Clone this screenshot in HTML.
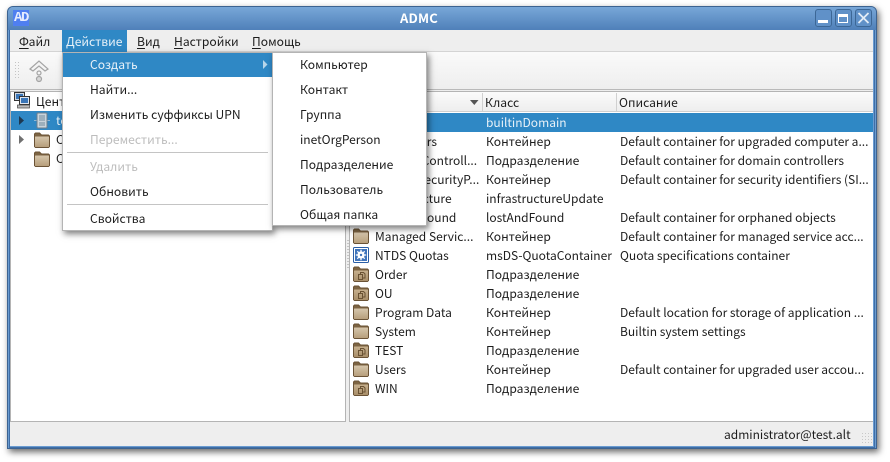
<!DOCTYPE html>
<html><head><meta charset="utf-8"><style>
*{box-sizing:border-box}
html,body{margin:0;padding:0;width:890px;height:462px;overflow:hidden;background:#fff}
body{position:relative;font:12.1px/16px "Noto Sans CJK SC","Liberation Sans",sans-serif;color:#1c1c1c}
.a,.t{position:absolute}
.t{white-space:nowrap;height:16px;margin-top:1px}
.l{font-size:12px}
u{text-underline-offset:2px}
.dis{color:#bdbdbd}
.w{color:#e8f1f8}
svg{position:absolute;display:block}
</style></head><body>
<svg width="0" height="0" style="position:absolute"><defs>
<linearGradient id="g" x1="0" y1="0" x2="0" y2="1"><stop offset="0" stop-color="#d6c6ac"/><stop offset="1" stop-color="#b79f7c"/></linearGradient>
<linearGradient id="h" x1="0" y1="0" x2="0" y2="1"><stop offset="0" stop-color="#c7b08e"/><stop offset="1" stop-color="#a88e69"/></linearGradient>
<symbol id="f" viewBox="0 0 16 16"><path d="M.5 4V2l1-1h4l2 2h7l1 1v10.500l-1 1h-13l-1-1z" fill="#7d6443" stroke="#6b5336"/><rect x="1" y="4.500" width="14" height="10.500" rx=".5" fill="url(#g)"/></symbol>
<symbol id="o" viewBox="0 0 16 16"><path d="M.5 4V2l1-1h4l2 2h7l1 1v10.500l-1 1h-13l-1-1z" fill="#7d6443" stroke="#6b5336"/><rect x="1" y="4.500" width="14" height="10.500" rx=".5" fill="url(#h)"/><path d="M5.500 8.500h4v5h-4zM7.500 8V6.500h3l1.500 1.500v4h-2" fill="none" stroke="#6a5233"/></symbol>
</defs></svg>

<!-- window frame + shadow -->
<div class="a" style="left:7px;top:6px;width:870px;height:443px;background:#6a9bd0;border:1px solid #3c6391;border-radius:6px 6px 0 0;box-shadow:2px 3px 7px rgba(0,0,0,.6)"></div>
<div class="a" style="left:9px;top:30px;width:866px;height:418px;border:1px solid #3f6ea6;border-top:0"></div>
<div class="a" style="left:8px;top:7px;width:868px;height:23px;background:linear-gradient(#78a7d8,#4f80b9);border-radius:5px 5px 0 0"></div>
<div class="a" style="left:13px;top:10px;width:16px;height:16px;background:#4f7ff0"></div>
<div class="t" style="left:14px;top:10px;width:15px;margin:0;color:#e6ecff;font:bold 14px/16px 'Liberation Mono',monospace;letter-spacing:-1.400px">AD</div>
<div class="t" style="left:400px;top:10px;margin:0;color:#fff;font-weight:bold;font-size:13px;letter-spacing:.2px">ADMC</div>
<!-- window buttons -->
<div class="a" style="left:815px;top:9px;width:17px;height:18px;border:1px solid #3c6796;border-radius:3px;background:#6091c8"></div>
<div class="a" style="left:835px;top:9px;width:17px;height:18px;border:1px solid #3c6796;border-radius:3px;background:#6091c8"></div>
<div class="a" style="left:855px;top:9px;width:17px;height:18px;border:1px solid #3c6796;border-radius:3px;background:#6091c8"></div>
<div class="a" style="left:818px;top:20px;width:10px;height:3px;background:#fff"></div>
<div class="a" style="left:838px;top:14px;width:10px;height:9px;border:1px solid #fff;border-top-width:3px"></div>
<svg style="left:857px;top:12px" width="13" height="12"><path d="M1.500 1l10 10M11.500 1l-10 10" stroke="#e4edf6" stroke-width="1.800"/></svg>

<!-- client -->
<div class="a" style="left:10px;top:30px;width:863px;height:416px;background:#eee"></div>
<div class="a" style="left:10px;top:51px;width:863px;height:1px;background:#d4d4d4"></div>
<div class="a" style="left:10px;top:52px;width:863px;height:37px;background:linear-gradient(#fafafa,#eee)"></div>
<div class="a" style="left:10px;top:89px;width:863px;height:1px;background:#b9b9b9"></div>
<div class="t" style="left:19px;top:33px"><u>Ф</u>айл</div>
<div class="a" style="left:62px;top:30px;width:65px;height:22px;background:#2f88c5"></div>
<div class="t w" style="left:66px;top:33px"><u>Д</u>ействие</div>
<div class="t" style="left:137px;top:33px"><u>В</u>ид</div>
<div class="t" style="left:174px;top:33px"><u>Н</u>астройки</div>
<div class="t" style="left:252px;top:33px"><u>П</u>омощь</div>
<!-- toolbar grip and icon -->
<div class="a" style="left:15px;top:62px;width:5px;height:18px;background:repeating-linear-gradient(90deg,#c4c4c4 0 1px,transparent 1px 3px);-webkit-mask:repeating-linear-gradient(#000 0 1px,transparent 1px 3px)"></div>
<svg style="left:28px;top:59px" width="22" height="24" fill="none" stroke="#a4a4a4" stroke-width="1.200"><path d="M2 10l9-8 9 8-3 2-6-5-6 5z" fill="#f4f4f4"/><circle cx="11" cy="14" r="2"/><circle cx="11" cy="20" r="2.500" fill="#d8d8d8"/></svg>

<!-- left pane -->
<div class="a" style="left:10px;top:91px;width:336px;height:331px;background:#fff;border:1px solid #b4b4b4"></div>
<svg style="left:14px;top:92px" width="17" height="17"><rect x=".5" y=".5" width="10" height="8" fill="#cfd8e2" stroke="#333"/><rect x="2" y="2" width="7" height="5" fill="#3a76b8"/><rect x="5.500" y="4.500" width="10" height="8" fill="#dfe6ee" stroke="#333"/><rect x="7" y="6" width="7" height="5" fill="#3a76b8"/><rect x="3.500" y="13" width="12" height="3" fill="#bbb" stroke="#444" stroke-width=".7"/></svg>
<div class="t" style="left:36px;top:93px">Центр</div>
<div class="a" style="left:11px;top:111px;width:52px;height:19px;background:#2f88c5"></div>
<svg style="left:19px;top:116px" width="6" height="9"><path d="M0 0l5 4.500-5 4.500z" fill="#1e3850"/></svg>
<svg style="left:34px;top:112px" width="16" height="17"><path d="M0 8.500h16" stroke="#8fb6d3"/><rect x="3" y="1" width="10" height="15" rx="1" fill="#c9d4dc" stroke="#6c7e8c"/><path d="M5 4h6M5 6h6M5 8h6M5 11h6M5 13h6" stroke="#6f8a9c"/></svg>
<div class="t w" style="left:56px;top:112px">test</div>
<svg style="left:19px;top:135px" width="6" height="9"><path d="M0 0l5 4.500-5 4.500z" fill="#707070"/></svg>
<svg style="left:34px;top:132px" width="16" height="16"><use href="#f"/></svg>
<div class="t" style="left:56px;top:131px">CN</div>
<svg style="left:34px;top:151px" width="16" height="16"><use href="#f"/></svg>
<div class="t" style="left:56px;top:150px">CN</div>

<div class="a" style="left:347px;top:240px;width:2px;height:30px;background:repeating-linear-gradient(#c4c4c4 0 1px,transparent 1px 3px)"></div>

<!-- right pane -->
<div class="a" style="left:349px;top:91px;width:524px;height:331px;background:#fff;border:1px solid #b4b4b4;border-right:0"></div>
<div class="a" style="left:350px;top:92px;width:523px;height:20px;background:linear-gradient(#fbfbfb,#eee);border-bottom:1px solid #d0d0d0"></div>
<div class="a" style="left:482px;top:93px;width:1px;height:18px;background:#d0d0d0"></div>
<div class="a" style="left:616px;top:93px;width:1px;height:18px;background:#d0d0d0"></div>
<svg style="left:470px;top:100px" width="9" height="5"><path d="M0 0h8.500l-4.200 5z" fill="#555"/></svg>
<div class="t" style="left:485px;top:94px">Класс</div>
<div class="t" style="left:619px;top:94px">Описание</div>
<div class="a" style="left:350px;top:113px;width:523px;height:19px;background:#2f88c5"></div>

<div class="t w l" style="left:486px;top:114px">builtinDomain</div>

<svg style="left:353px;top:133px" width="16" height="16"><use href="#f"/></svg><div class="t l" style="left:375px;top:133px">Computers</div><div class="t" style="left:486px;top:133px">Контейнер</div><div class="t l" style="left:620px;top:133px">Default container for upgraded computer a...</div>
<svg style="left:353px;top:152px" width="16" height="16"><use href="#o"/></svg><div class="t l" style="left:375px;top:152px">Domain Controll...</div><div class="t" style="left:486px;top:152px">Подразделение</div><div class="t l" style="left:620px;top:152px">Default container for domain controllers</div>
<svg style="left:353px;top:171px" width="16" height="16"><use href="#f"/></svg><div class="t l" style="left:375px;top:171px">ForeignSecurityP...</div><div class="t" style="left:486px;top:171px">Контейнер</div><div class="t l" style="left:620px;top:171px">Default container for security identifiers (SI...</div>
<div class="t l" style="left:375px;top:190px">Infrastructure</div><div class="t l" style="left:486px;top:190px">infrastructureUpdate</div>
<div class="t l" style="left:375px;top:209px">LostAndFound</div><div class="t l" style="left:486px;top:209px">lostAndFound</div><div class="t l" style="left:620px;top:209px">Default container for orphaned objects</div>
<svg style="left:353px;top:228px" width="16" height="16"><use href="#f"/></svg><div class="t l" style="left:375px;top:228px">Managed Servic...</div><div class="t" style="left:486px;top:228px">Контейнер</div><div class="t l" style="left:620px;top:228px">Default container for managed service acc...</div>
<svg style="left:353px;top:247px" width="16" height="16"><rect x=".5" y=".5" width="15" height="15" rx="1" fill="#fff" stroke="#2a5ea6"/><rect x="2" y="2" width="12" height="12" fill="#3f74bb"/><circle cx="8" cy="8" r="3.600" fill="#fff"/><path d="M8 2.800v10.400M2.800 8h10.400M4.300 4.300l7.400 7.400M11.700 4.300l-7.400 7.400" stroke="#fff" stroke-width="1.300"/><circle cx="8" cy="8" r="1.200" fill="#3f74bb"/></svg><div class="t l" style="left:375px;top:247px">NTDS Quotas</div><div class="t l" style="left:486px;top:247px">msDS-QuotaContainer</div><div class="t l" style="left:620px;top:247px">Quota specifications container</div>
<svg style="left:353px;top:266px" width="16" height="16"><use href="#o"/></svg><div class="t l" style="left:375px;top:266px">Order</div><div class="t" style="left:486px;top:266px">Подразделение</div>
<svg style="left:353px;top:285px" width="16" height="16"><use href="#o"/></svg><div class="t l" style="left:375px;top:285px">OU</div><div class="t" style="left:486px;top:285px">Подразделение</div>
<svg style="left:353px;top:304px" width="16" height="16"><use href="#f"/></svg><div class="t l" style="left:375px;top:304px">Program Data</div><div class="t" style="left:486px;top:304px">Контейнер</div><div class="t l" style="left:620px;top:304px">Default location for storage of application ...</div>
<svg style="left:353px;top:323px" width="16" height="16"><use href="#f"/></svg><div class="t l" style="left:375px;top:323px">System</div><div class="t" style="left:486px;top:323px">Контейнер</div><div class="t l" style="left:620px;top:323px">Builtin system settings</div>
<svg style="left:353px;top:342px" width="16" height="16"><use href="#o"/></svg><div class="t l" style="left:375px;top:342px">TEST</div><div class="t" style="left:486px;top:342px">Подразделение</div>
<svg style="left:353px;top:361px" width="16" height="16"><use href="#f"/></svg><div class="t l" style="left:375px;top:361px">Users</div><div class="t" style="left:486px;top:361px">Контейнер</div><div class="t l" style="left:620px;top:361px">Default container for upgraded user accou...</div>
<svg style="left:353px;top:380px" width="16" height="16"><use href="#o"/></svg><div class="t l" style="left:375px;top:380px">WIN</div><div class="t" style="left:486px;top:380px">Подразделение</div>

<!-- status -->
<div class="t l" style="left:724px;top:426px">administrator@test.alt</div>
<div class="a" style="left:862px;top:433px;width:11px;height:12px;background:repeating-linear-gradient(90deg,#c8c8c8 0 1px,transparent 1px 3px);-webkit-mask:repeating-linear-gradient(#000 0 1px,transparent 1px 3px)"></div>

<!-- main menu -->
<div class="a" style="left:62px;top:52px;width:211px;height:179px;background:#fff;border:1px solid #b4b4b4;box-shadow:2px 3px 6px rgba(0,0,0,.5)"></div>
<div class="a" style="left:63px;top:53px;width:209px;height:24px;background:#2f88c5"></div>
<div class="t w" style="left:90px;top:56px">Создать</div>
<svg style="left:263px;top:60px" width="5" height="9"><path d="M0 0l4.500 4.500L0 9z" fill="#b8d6ea"/></svg>
<div class="t" style="left:90px;top:81px">Найти...</div>
<div class="t" style="left:90px;top:106px">Изменить суффиксы UPN</div>
<div class="t dis" style="left:90px;top:131px">Переместить...</div>
<div class="a" style="left:67px;top:152px;width:201px;height:1px;background:#c4c4c4"></div>
<div class="t dis" style="left:90px;top:158px">Удалить</div>
<div class="t" style="left:90px;top:183px">Обновить</div>
<div class="a" style="left:67px;top:204px;width:201px;height:1px;background:#c4c4c4"></div>
<div class="t" style="left:90px;top:210px">Свойства</div>

<!-- submenu -->
<div class="a" style="left:272px;top:52px;width:155px;height:174px;background:#fff;border:1px solid #b4b4b4;box-shadow:2px 3px 6px rgba(0,0,0,.5)"></div>
<div class="t" style="left:300px;top:56px">Компьютер</div>
<div class="t" style="left:300px;top:81px">Контакт</div>
<div class="t" style="left:300px;top:106px">Группа</div>
<div class="t l" style="left:300px;top:131px">inetOrgPerson</div>
<div class="t" style="left:300px;top:156px">Подразделение</div>
<div class="t" style="left:300px;top:181px">Пользователь</div>
<div class="t" style="left:300px;top:206px">Общая папка</div>
</body></html>
